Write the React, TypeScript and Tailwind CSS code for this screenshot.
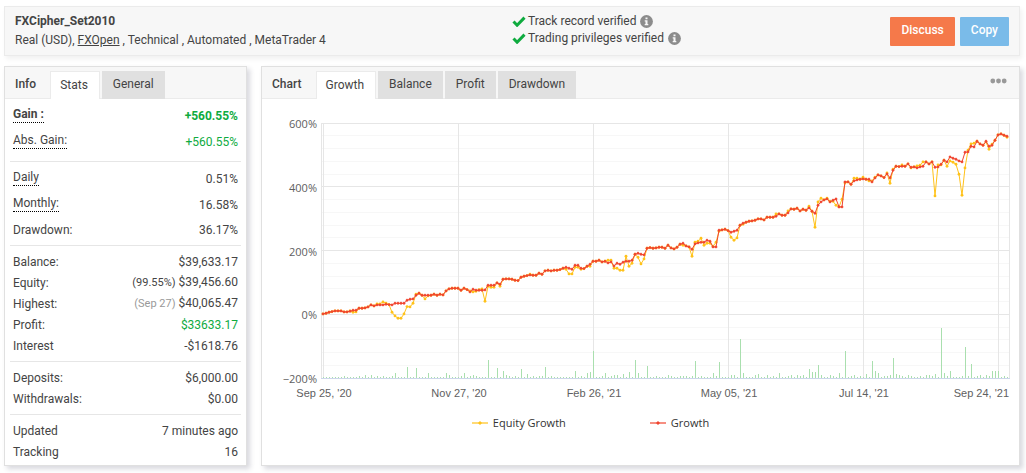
import React, {useState} from 'react'

// Daily growth samples, one unit is 200/191 of a percent
const growth = [
	1, 3, 6, 8, 10, 10, 10, 7, 7, 9, 12, 12, 18, 18, 19, 22, 28, 25, 28, 28, 28,
	30, 29, 28, 33, 33, 33, 33, 42, 45, 46, 57, 63, 57, 57, 57, 57, 60, 57, 60,
	58, 70, 76, 78, 78, 78, 72, 78, 74, 67, 75, 72, 72, 72, 73, 87, 87, 87, 94,
	90, 105, 106, 106, 105, 102, 101, 111, 114, 116, 118, 117, 117, 123, 120, 130,
	132, 130, 132, 132, 134, 138, 141, 138, 135, 147, 147, 138, 137, 144, 150,
	159, 159, 162, 157, 159, 154, 157, 145, 153, 150, 156, 159, 159, 162, 180,
	183, 180, 178, 198, 200, 198, 199, 201, 201, 198, 207, 199, 196, 201, 210,
	213, 205, 202, 195, 211, 214, 216, 216, 222, 219, 202, 202, 252, 253, 255,
	251, 246, 249, 252, 267, 273, 276, 279, 280, 282, 286, 286, 283, 291, 291,
	291, 294, 301, 297, 297, 304, 316, 315, 318, 310, 315, 312, 319, 309, 303,
	327, 337, 343, 346, 337, 342, 346, 322, 322, 397, 397, 390, 400, 403, 405,
	406, 405, 405, 397, 409, 418, 415, 410, 421, 409, 432, 444, 443, 444, 444,
	451, 441, 442, 439, 442, 444, 457, 451, 457, 441, 442, 450, 462, 457, 472,
	468, 465, 460, 457, 486, 487, 504, 502, 519, 511, 507, 519, 504, 507, 522,
	538, 541, 537, 534,
]

// Days on which equity differs from the growth line
const equityDiff: Record<number, number> = {
	9: 10, 10: 6, 11: 7, 18: 31, 19: 31, 20: 37, 21: 33, 23: 6, 24: -5, 25: -12,
	26: -12, 27: 1, 28: 23, 29: 22, 30: 33, 31: 60, 34: 46, 35: 55, 49: 70,
	50: 67, 51: 69, 52: 74, 53: 76, 54: 39, 55: 84, 56: 81, 57: 81, 59: 84,
	69: 120, 81: 135, 82: 121, 83: 121, 84: 141, 85: 141, 86: 135, 89: 144,
	95: 162, 96: 162, 97: 138, 98: 138, 99: 132, 100: 132, 101: 174, 102: 144,
	103: 153, 105: 171, 106: 151, 107: 166, 120: 207, 123: 174, 124: 216,
	125: 219, 126: 228, 127: 207, 128: 213, 129: 213, 130: 204, 131: 216,
	132: 249, 136: 231, 137: 222, 138: 229, 140: 270, 151: 301, 155: 310,
	162: 324, 164: 261, 165: 337, 166: 348, 168: 348, 169: 339, 170: 339,
	171: 327, 172: 322, 173: 345, 174: 394, 177: 408, 178: 408, 180: 411,
	182: 400, 183: 400, 184: 411, 188: 424, 189: 393, 190: 435, 193: 448,
	196: 439, 198: 445, 199: 447, 200: 457, 204: 355, 205: 448, 206: 448,
	208: 444, 209: 460, 210: 456, 211: 450, 212: 420, 213: 357, 214: 439,
	215: 492, 216: 511, 217: 513, 221: 517, 222: 495, 223: 510, 228: 531,
}

const equity = growth.map((v, i) => equityDiff[i] ?? v)

// Traded volume, bar height by day, all others are 1
const volume: Record<number, number> = {
	7: 2, 12: 2, 14: 3, 16: 3, 18: 2, 20: 2, 23: 2, 24: 5, 28: 11, 31: 10, 35: 5,
	41: 5, 42: 3, 46: 2, 47: 5, 49: 2, 50: 3, 51: 2, 55: 18, 58: 10, 60: 7,
	61: 3, 62: 2, 64: 2, 66: 9, 68: 4, 70: 2, 72: 2, 73: 2, 74: 11, 76: 2, 84: 7,
	86: 2, 88: 5, 89: 6, 90: 27, 93: 2, 94: 5, 96: 2, 97: 3, 98: 3, 100: 4,
	102: 6, 104: 18, 105: 5, 108: 12, 111: 2, 115: 3, 116: 2, 119: 2, 120: 2,
	121: 2, 123: 2, 124: 17, 126: 2, 130: 5, 131: 2, 132: 16, 136: 3, 137: 3,
	139: 39, 140: 5, 144: 3, 145: 4, 148: 3, 150: 2, 152: 5, 155: 2, 156: 3,
	158: 3, 159: 2, 160: 3, 162: 9, 163: 6, 164: 6, 165: 13, 166: 3, 169: 3,
	170: 2, 172: 5, 174: 27, 176: 2, 177: 3, 179: 2, 181: 4, 183: 17, 184: 7,
	185: 5, 187: 2, 188: 2, 189: 3, 190: 20, 191: 4, 192: 3, 193: 2, 195: 3,
	196: 2, 199: 2, 201: 3, 202: 3, 203: 2, 204: 4, 206: 50, 207: 5, 208: 2,
	209: 7, 213: 2, 214: 31, 215: 2, 216: 14, 218: 2, 219: 3, 221: 3, 222: 2,
	223: 7, 224: 7, 225: 7, 227: 2,
}

const PLOT = {left: 60, right: 747, top: 20, bottom: 275}
const STEP = 3
const ROW = (PLOT.bottom - PLOT.top) / 20

const px = (i: number) => PLOT.left + 1 + i * STEP
const py = (v: number) => PLOT.bottom - ROW * 5 - v / 3

const toLine = (data: number[]) =>
	data.map((v, i) => `${i ? 'L' : 'M'}${px(i)} ${py(v).toFixed(1)}`).join('')

const yLabels = ['600%', '400%', '200%', '0%', '−200%']
const xLabels = [
	"Sep 25, '20",
	"Nov 27, '20",
	"Feb 26, '21",
	"May 05, '21",
	"Jul 14, '21",
	"Sep 24, '21",
]

const Series: React.FC<{data: number[]; color: string; round?: boolean}> = ({
	data,
	color,
	round,
}) => (
	<g>
		<path
			d={toLine(data)}
			fill='none'
			stroke={color}
			strokeWidth='1'
			strokeLinejoin='round'
		/>
		{data.map((v, i) =>
			round ? (
				<circle key={i} cx={px(i)} cy={py(v)} r='1.4' fill={color} />
			) : (
				<path
					key={i}
					d={`M${px(i)} ${py(v) - 1.7}l1.7 1.7l-1.7 1.7l-1.7 -1.7z`}
					fill={color}
				/>
			),
		)}
	</g>
)

const GrowthChart: React.FC = () => (
	<svg
		viewBox='0 0 757 300'
		className='block w-full font-["Liberation_Sans",Arial,sans-serif] text-[11px]'
		role='img'
		aria-label='Growth chart'
	>
		<g shapeRendering='crispEdges'>
			{Array.from({length: 20}, (_, i) => (
				<rect
					key={i}
					x={PLOT.left}
					y={Math.floor(PLOT.top + i * ROW)}
					width={PLOT.right - PLOT.left}
					height='1'
					fill={i % 5 ? '#f7f7f7' : '#e6e6e6'}
				/>
			))}
			{xLabels.map((label, i) => (
				<rect
					key={label}
					x={PLOT.left + 1 + i * 135}
					y={PLOT.top}
					width='1'
					height={PLOT.bottom - PLOT.top}
					fill='#e6e6e6'
				/>
			))}
			{[PLOT.left - 1, PLOT.right].map(x => (
				<rect
					key={x}
					x={x}
					y={PLOT.top}
					width='1'
					height={PLOT.bottom - PLOT.top}
					fill='#e6e6e6'
				/>
			))}
			{growth.map((_, i) => (
				<rect
					key={i}
					x={px(i)}
					y={PLOT.bottom - (volume[i] ?? 1)}
					width='1'
					height={volume[i] ?? 1}
					fill='#a9dfae'
				/>
			))}
			<rect
				x={PLOT.left - 1}
				y={PLOT.bottom}
				width={PLOT.right - PLOT.left + 2}
				height='1'
				fill='#ccd6eb'
			/>
		</g>
		<Series data={equity} color='#ffc21a' round />
		<Series data={growth} color='#f0452f' />
		<g fill='#606060'>
			{yLabels.map((label, i) => (
				<text
					key={label}
					x={PLOT.left - 5}
					y={PLOT.top + 5 + i * ROW * 5}
					textAnchor='end'
					className='font-["Open_Sans",sans-serif]'
				>
					{label}
				</text>
			))}
			{xLabels.map((label, i) => (
				<text
					key={label}
					x={i === 5 ? PLOT.right : PLOT.left + 2 + i * 135}
					y='294'
					textAnchor={i === 5 ? 'end' : 'middle'}
				>
					{label}
				</text>
			))}
		</g>
	</svg>
)

const LegendItem: React.FC<{label: string; color: string}> = ({
	label,
	color,
}) => (
	<div className='flex items-center gap-[5px]'>
		<svg width='16' height='6' viewBox='0 0 16 6' aria-hidden='true'>
			<path d='M0 3h16' stroke={color} strokeWidth='1.2' />
			<path d='M8 1l2 2l-2 2l-2 -2z' fill={color} />
		</svg>
		<span>{label}</span>
	</div>
)

const CheckIcon: React.FC = () => (
	<svg width='14' height='11' viewBox='0 0 14 11' aria-hidden='true'>
		<path d='M1.5 5.5l3.6 3.7L12.5 1.6' fill='none' stroke='#0fab3f' strokeWidth='3' />
	</svg>
)

const InfoIcon: React.FC = () => (
	<svg width='13' height='13' viewBox='0 0 13 13' aria-hidden='true'>
		<circle cx='6.5' cy='6.5' r='6.4' fill='#8c8c8c' />
		<path
			d='M5.5 2.5h2v1.8h-2zM4.7 5.3h2.8v3.7h.8v1.2H4.7V9h.8V6.5h-.8z'
			fill='#f7f7f7'
		/>
	</svg>
)

interface TabBarProps {
	title: string
	tabs: string[]
	children?: React.ReactNode
}

const TabBar: React.FC<TabBarProps> = ({title, tabs, children}) => {
	const [active, setActive] = useState(tabs[0])

	return (
		<div className='flex h-8 items-end border-b border-[#ebebeb] bg-[#f7f7f7]'>
			<h2 className='flex h-7 items-center pr-3.5 pl-2.5 font-medium'>
				{title}
			</h2>
			<div role='tablist' className='flex gap-0.5'>
				{tabs.map(tab => (
					<button
						key={tab}
						role='tab'
						aria-selected={tab === active}
						onClick={() => setActive(tab)}
						className={
							tab === active
								? '-mb-px h-7 border-x border-t border-[#ebebeb] bg-white pr-[11px] pb-0.5 pl-[9px]'
								: '-mb-px h-7 bg-[#e0e0e0] px-[11px] pb-0.5'
						}
					>
						{tab}
					</button>
				))}
			</div>
			{children}
		</div>
	)
}

interface StatProps {
	label: string
	value: string
	note?: React.ReactNode
	tall?: boolean
	tip?: boolean
	bold?: boolean
	green?: boolean
}

const Stat: React.FC<StatProps> = ({
	label,
	value,
	note,
	tall,
	tip,
	bold,
	green,
}) => (
	<div
		className={`flex justify-between px-[3px] ${tall ? 'h-[26px]' : 'h-[21px]'} ${tip ? 'items-start' : 'items-center'} ${bold ? 'font-bold' : ''}`}
	>
		<dt
			className={
				tip ? 'mt-[3px] border-b border-dotted border-black leading-[15px]' : ''
			}
		>
			{label}
		</dt>
		<dd className={`${tip ? 'mt-1' : ''} ${green ? 'text-[#0fab3f]' : ''}`}>
			{note} {value}
		</dd>
	</div>
)

const Group: React.FC<{children: React.ReactNode}> = ({children}) => (
	<dl className='border-t border-[#e6e6e6] py-[5px] first:border-t-0 last:pb-[3px]'>
		{children}
	</dl>
)

const App: React.FC = () => (
	<div className='bg-white pt-1.5 pr-1.5 pb-2 pl-1 font-[Roboto,sans-serif] text-xs leading-4 text-[#444]'>
		<header className='flex h-[50px] items-center justify-between border border-[#ebebeb] bg-[#f7f7f7] px-2.5 shadow-[2px_3px_5px_rgba(0,0,0,0.06)]'>
			<div className='w-1/2 pb-[3px]'>
				<h1 className='font-bold leading-5'>FXCipher_Set2010</h1>
				<p className='leading-[18px]'>
					Real (USD),{' '}
					<a href='#' className='underline'>
						FXOpen
					</a>{' '}
					, Technical , Automated , MetaTrader 4
				</p>
			</div>
			<ul className='flex-1 self-start pt-1.5 leading-[17px]'>
				<li className='flex items-center gap-0.5'>
					<CheckIcon />
					<span className='mr-0.5'>Track record verified</span>
					<InfoIcon />
				</li>
				<li className='flex items-center gap-0.5'>
					<CheckIcon />
					<span className='mr-0.5'>Trading privileges verified</span>
					<InfoIcon />
				</li>
			</ul>
			<div className='flex gap-[5px] font-medium text-white'>
				<button className='h-[29px] rounded-[1px] bg-[#f5794a] px-[11px] pb-0.5'>
					Discuss
				</button>
				<button className='h-[29px] rounded-[1px] bg-[#7abbe9] px-[11px] pb-0.5'>
					Copy
				</button>
			</div>
		</header>

		<main className='mt-2.5 flex gap-3.5'>
			<section className='w-[243px] shrink-0 border border-[#e0e0e0] shadow-[3px_3px_5px_rgba(60,60,90,0.2)]'>
				<TabBar title='Info' tabs={['Stats', 'General']} />
				<div className='px-[5px]'>
					<Group>
						<Stat label='Gain :' value='+560.55%' tall tip bold green />
						<Stat label='Abs. Gain:' value='+560.55%' tall tip green />
					</Group>
					<Group>
						<Stat label='Daily' value='0.51%' tall tip />
						<Stat label='Monthly:' value='16.58%' tall tip />
						<Stat label='Drawdown:' value='36.17%' />
					</Group>
					<Group>
						<Stat label='Balance:' value='$39,633.17' />
						<Stat
							label='Equity:'
							value='$39,456.60'
							note={<span className='text-[11px]'>(99.55%)</span>}
						/>
						<Stat
							label='Highest:'
							value='$40,065.47'
							note={
								<span className='text-[11px] text-[#999]'>(Sep 27)</span>
							}
						/>
						<Stat label='Profit:' value='$33633.17' green />
						<Stat label='Interest' value='-$1618.76' />
					</Group>
					<Group>
						<Stat label='Deposits:' value='$6,000.00' />
						<Stat label='Withdrawals:' value='$0.00' />
					</Group>
					<Group>
						<Stat label='Updated' value='7 minutes ago' />
						<Stat label='Tracking' value='16' />
					</Group>
				</div>
			</section>

			<section className='flex-1 border border-[#e0e0e0] shadow-[3px_3px_5px_rgba(60,60,90,0.2)]'>
				<TabBar
					title='Chart'
					tabs={['Growth', 'Balance', 'Profit', 'Drawdown']}
				>
					<button
						aria-label='More options'
						className='mr-3 ml-auto flex h-full items-center pb-1'
					>
						<svg width='17' height='6' viewBox='0 0 17 6' fill='#999'>
							<circle cx='2.8' cy='3' r='2.4' />
							<circle cx='8.5' cy='3' r='2.4' />
							<circle cx='14.2' cy='3' r='2.4' />
						</svg>
					</button>
				</TabBar>
				<div className='pt-1'>
					<GrowthChart />
				</div>
				<div className='mt-3 flex justify-center gap-[84px] pr-[100px] font-["Open_Sans",sans-serif] text-[11px] text-[#333]'>
					<LegendItem label='Equity Growth' color='#ffc21a' />
					<LegendItem label='Growth' color='#f0452f' />
				</div>
			</section>
		</main>
	</div>
)

export default App
